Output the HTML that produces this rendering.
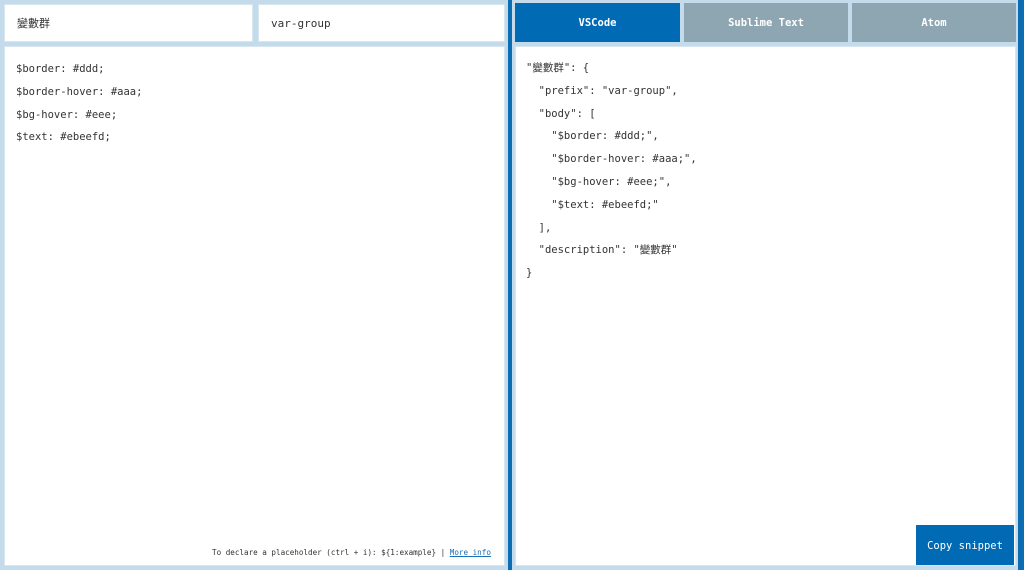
<!DOCTYPE html>
<html><head><meta charset="utf-8"><style>
*{box-sizing:border-box;margin:0;padding:0}
body{width:1024px;height:570px;background:#c3dbea;position:relative;overflow:hidden;font-family:"DejaVu Sans Mono","Liberation Mono","Noto Sans CJK TC",monospace;font-size:10.5px;color:#333}
.box{position:absolute;background:#fff;border:1px solid #d8e6ef}
.in{padding:0 12px;line-height:38px;font-size:11px}
.code div{height:22.8px;line-height:22.8px;white-space:pre}
.tab{position:absolute;top:3px;height:39px;line-height:40px;text-align:center;color:#fff;font-size:10.5px;font-weight:bold}
</style></head><body>
<div class="box in" style="left:4px;top:4px;width:249px;height:38px">變數群</div>
<div class="box in" style="left:258px;top:4px;width:247px;height:38px">var-group</div>
<div class="box code" style="left:4px;top:46px;width:501px;height:520px;padding:11px 11px">
<div>$border: #ddd;</div><div>$border-hover: #aaa;</div><div>$bg-hover: #eee;</div><div>$text: #ebeefd;</div>
</div>
<div style="position:absolute;left:212px;top:548px;font-size:7.6px;color:#333;white-space:pre">To declare a placeholder (ctrl + i): ${1:example} | <span style="color:#1a6fb5;text-decoration:underline">More info</span></div>
<div style="position:absolute;left:508px;top:0;width:4px;height:570px;background:#0d6db3"></div>
<div style="position:absolute;left:1018px;top:0;width:6px;height:570px;background:#0d6db3"></div>
<div class="tab" style="left:515px;width:165px;background:#006ab4">VSCode</div>
<div class="tab" style="left:684px;width:164px;background:#8ea5b2">Sublime Text</div>
<div class="tab" style="left:852px;width:164px;background:#8ea5b2">Atom</div>
<div class="box code" style="left:515px;top:46px;width:501px;height:520px;padding:10px 10px">
<div>"變數群": {</div><div>  "prefix": "var-group",</div><div>  "body": [</div><div>    "$border: #ddd;",</div><div>    "$border-hover: #aaa;",</div><div>    "$bg-hover: #eee;",</div><div>    "$text: #ebeefd;"</div><div>  ],</div><div>  "description": "變數群"</div><div>}</div>
</div>
<div style="position:absolute;left:916px;top:525px;width:98px;height:40px;background:#006ab4;color:#fff;font-size:10.5px;line-height:42px;text-align:center">Copy snippet</div>
</body></html>
